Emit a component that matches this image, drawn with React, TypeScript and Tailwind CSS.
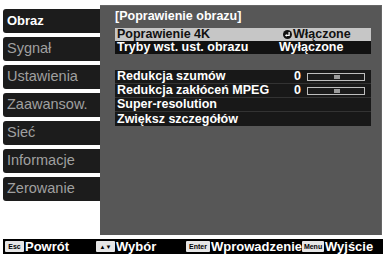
import React from 'react';

const tabs = ['Obraz', 'Sygnał', 'Ustawienia', 'Zaawansow.', 'Sieć', 'Informacje', 'Zerowanie'];

const font = { fontFamily: '"Liberation Sans", Arial, sans-serif' };

const Slider = () => (
  <div className="relative ml-auto mr-[6px] h-[8px] w-[58px] border border-[#bdbdbd] bg-[#1a1a1a]">
    <div className="absolute left-[26px] top-[1px] h-[4px] w-[6px] bg-[#9a9a9a]" />
  </div>
);

const ReturnIcon = () => (
  <svg width="9" height="9" viewBox="0 0 10 10" className="mr-[1px]">
    <circle cx="5" cy="5" r="5" fill="#111" />
    <path d="M6.8 2.2 V6 H3.2" stroke="#fff" strokeWidth="1.4" fill="none" />
    <path d="M2.2 6 L4 4.4 V7.6 Z" fill="#fff" />
  </svg>
);

const Key = ({ children, w }: { children: React.ReactNode; w: string }) => (
  <span className={`mr-[1px] flex h-[11px] ${w} items-center justify-center rounded-[1px] bg-[#e6e6e6] text-[7px] font-bold leading-none text-black`}>
    {children}
  </span>
);

export default function App() {
  return (
    <div className="flex h-[256px] w-[386px] flex-col bg-white select-none" style={font}>
      <div className="flex h-[235px]">
        <div className="flex w-[100px] flex-col gap-[4px] pl-[3px] pt-[9px]">
          {tabs.map((t, i) => (
            <div
              key={t}
              className={`flex h-[24px] items-center rounded-l-[3px] bg-[#1c1c1c] pl-[4px] ${i === 0 ? 'text-[13px] font-bold text-white' : 'text-[14.5px] text-[#a0a0a0]'}`}
            >
              {t}
            </div>
          ))}
        </div>
        <div className="mt-[5px] h-[230px] w-[282px] border-t border-r border-[#666] bg-[#575757] pl-[15px] pr-[10px] pt-[3px] text-[12.5px] font-bold leading-none">
          <div className="mb-[5px] flex h-[14px] items-center text-white">[Poprawienie obrazu]</div>
          <div className="flex h-[13px] items-center bg-[#c6c6c6] pl-[2px] text-[#111]">
            <span className="w-[166px]">Poprawienie 4K</span>
            <ReturnIcon />
            <span>Włączone</span>
          </div>
          <div className="flex h-[13px] items-center bg-[#111] pl-[2px] text-white">
            <span className="w-[162px]">Tryby wst. ust. obrazu</span>
            <span>Wyłączone</span>
          </div>
          <div className="mt-[16px] flex flex-col bg-[#181818] text-white">
            <div className="flex h-[14px] items-center border-b border-[#333] pl-[2px]">
              <span className="w-[177px]">Redukcja szumów</span>
              <span>0</span>
              <Slider />
            </div>
            <div className="flex h-[14px] items-center border-b border-[#333] pl-[2px]">
              <span className="w-[177px]">Redukcja zakłóceń MPEG</span>
              <span>0</span>
              <Slider />
            </div>
            <div className="flex h-[14px] items-center border-b border-[#333] pl-[2px]">Super-resolution</div>
            <div className="flex h-[14px] items-center pl-[2px]">Zwiększ szczegółów</div>
          </div>
        </div>
      </div>
      <div className="mx-[3px] mt-[4px] flex h-[15px] w-[380px] items-center bg-black pl-[2px] text-[13px] font-bold leading-none text-white">
        <Key w="w-[19px]">Esc</Key>
        <span className="w-[71px]">Powrót</span>
        <Key w="w-[19px]">
          <span className="text-[6px]">▲▼</span>
        </Key>
        <span className="w-[70px]">Wybór</span>
        <Key w="w-[24px]">Enter</Key>
        <span>Wprowadzenie</span>
        <Key w="w-[22px]">Menu</Key>
        <span>Wyjście</span>
      </div>
    </div>
  );
}
